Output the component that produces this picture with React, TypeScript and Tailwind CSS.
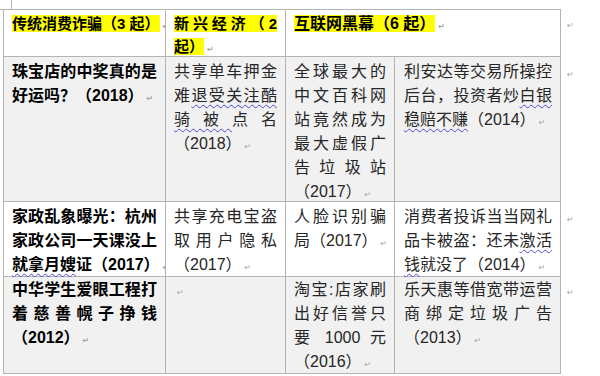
import React from "react";

type Seg = string | { t: string; u: true };
type Cell = { lines: Seg[][]; bold?: boolean };
type Row = { gray: boolean; pad: string; cells: Cell[] };

const U = (t: string): Seg => ({ t, u: true });

// Body rows — one array per rendered line so the Word-style breaks are kept
const rows: Row[] = [
  {
    gray: true,
    pad: "pt-[3px]",
    cells: [
      { bold: true, lines: [["珠宝店的中奖真的是"], ["好运吗？（2018）"]] },
      { lines: [["共享单车押金"], ["难", U("退受关注酷")], [U("骑被"), "点名"], ["（2018）"]] },
      {
        lines: [["全球最大的"], ["中文百科网"], ["站竟然成为"], ["最大虚假广"], ["告垃圾站"], ["（2017）"]],
      },
      { lines: [["利安达等交易所操控"], ["后台，投资者炒", U("白银")], [U("稳赔不赚"), "（2014）"]] },
    ],
  },
  {
    gray: false,
    pad: "pt-[3px]",
    cells: [
      {
        bold: true,
        lines: [["家政乱象曝光：杭州"], ["家政公司一天课没上"], [U("就拿月嫂"), "证（2017）"]],
      },
      { lines: [["共享充电宝盗"], ["取用户隐私"], ["（2017）"]] },
      { lines: [["人脸识别骗"], ["局（2017）"]] },
      { lines: [["消费者投诉当当网礼"], ["品卡被盗：还未", U("激活")], [U("钱"), "就没了（2014）"]] },
    ],
  },
  {
    gray: true,
    pad: "pt-[1px]",
    cells: [
      { bold: true, lines: [["中华学生爱眼工程打"], ["着慈善幌子挣钱"], ["（2012）"]] },
      { lines: [[""]] },
      { lines: [["淘宝:店家刷"], ["出好信誉只"], ["要 1000 元"], ["（2016）"]] },
      { lines: [["乐天惠等借宽带运营"], ["商绑定垃圾广告"], ["（2013）"]] },
    ],
  },
];

function Mark() {
  return <span className="ml-[3px] text-[8px] text-[#a3a3a3] font-['DejaVu_Sans',sans-serif]">↵</span>;
}

function Line({ segs, last }: { segs: Seg[]; last: boolean }) {
  return (
    <div className={last ? "text-left whitespace-nowrap" : "text-justify [text-align-last:justify]"}>
      {segs.map((s, i) =>
        typeof s === "string" ? (
          <span key={i}>{s}</span>
        ) : (
          <span
            key={i}
            className="underline decoration-wavy decoration-[#4b4bd6] decoration-1 underline-offset-[3px]"
          >
            {s.t}
          </span>
        )
      )}
      {last && <Mark />}
    </div>
  );
}

export default function App() {
  const cellBase = "border-r border-b border-[#b4b4b4] px-[8px] leading-[24px] text-[16px]";

  return (
    <div
      lang="zh-CN"
      className="relative w-[600px] h-[376px] overflow-hidden bg-white text-[#262626] font-['Liberation_Sans','Noto_Sans_CJK_SC',sans-serif]"
    >
      {/* Word text-boundary corner mark */}
      <div className="absolute left-0 top-0 w-[12px] h-[10px] border-r border-b border-[#b4b4b4]" />

      <div className="ml-[3px] mt-[9px] grid grid-cols-[163px_120px_109px_166px_30px] grid-rows-[48px_145px_75px_97px]">
        {/* Header row */}
        <div className="border-l border-t border-r border-b border-[#b4b4b4] bg-white px-[8px] pt-[2px] leading-[23px] text-[15px] font-bold text-black">
          <div className="whitespace-nowrap">
            <span className="bg-[#ffff00]">传统消费诈骗（3 起）</span>
            <Mark />
          </div>
        </div>
        <div className="border-t border-r border-b border-[#b4b4b4] bg-white px-[8px] pt-[2px] leading-[23px] text-[15px] font-bold text-black">
          <div className="text-justify [text-align-last:justify]">
            <span className="bg-[#ffff00]">新兴经济（2</span>
          </div>
          <div>
            <span className="bg-[#ffff00]">起）</span>
            <Mark />
          </div>
        </div>
        <div className="col-span-2 border-t border-r border-b border-[#b4b4b4] bg-white px-[8px] pt-[2px] leading-[23px] text-[16px] font-bold text-black">
          <div className="whitespace-nowrap">
            <span className="bg-[#ffff00]">互联网黑幕（6 起）</span>
            <Mark />
          </div>
        </div>
        <div className="pl-[3px] pt-[2px] leading-[23px]">
          <Mark />
        </div>

        {/* Body rows */}
        {rows.map((row, ri) => (
          <React.Fragment key={ri}>
            {row.cells.map((cell, ci) => (
              <div
                key={ci}
                className={`${cellBase} ${row.pad} ${row.gray ? "bg-[#f1f1f1]" : "bg-white"} ${
                  ci === 0 ? "border-l font-bold text-black" : ""
                } ${ci === 3 ? "pl-[9px]" : ""}`}
              >
                {cell.lines.map((segs, li) => (
                  <Line key={li} segs={segs} last={li === cell.lines.length - 1} />
                ))}
              </div>
            ))}
            <div className={`pl-[3px] leading-[24px] ${row.pad}`}>
              <Mark />
            </div>
          </React.Fragment>
        ))}
      </div>
    </div>
  );
}
